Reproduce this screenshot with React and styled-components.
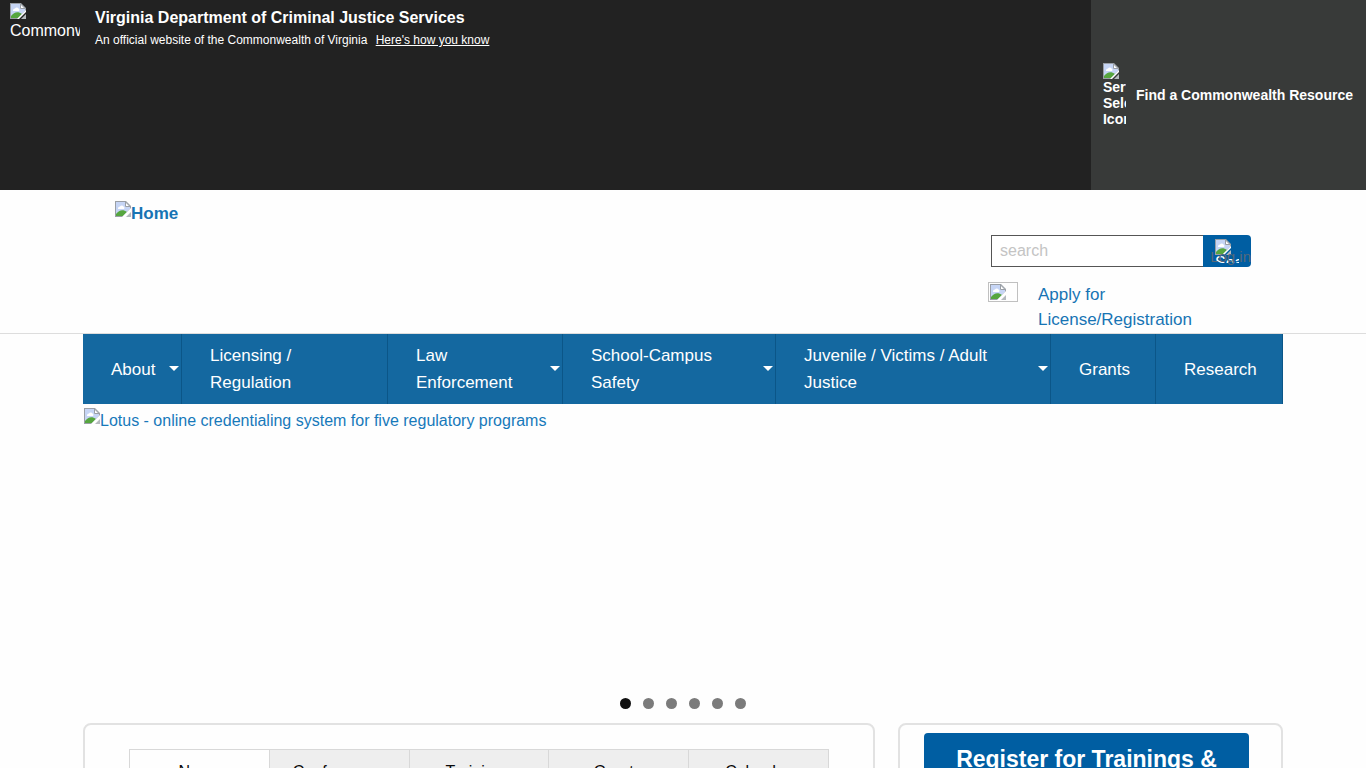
import { useState } from 'react';
import styled, { createGlobalStyle } from 'styled-components';

const GlobalStyle = createGlobalStyle`
    *, *::before, *::after {
        box-sizing: border-box;
    }

    body {
        margin: 0;
        background-color: #fefefe;
        color: #0a0a0a;
        font-family: "Liberation Sans", Arial, sans-serif;
        font-size: 16px;
        line-height: 24px;
    }

    a {
        color: #1774b4;
        text-decoration: none;
    }
`

const BrandBar = styled.header`
    display: flex;
    justify-content: space-between;
    min-height: 190px;
    background-color: #222;
    color: #fff;

    div.brand {
        display: flex;
        gap: 15px;
        padding: 3px 10px;
    }

    strong {
        display: block;
        font-size: 16px;
        line-height: 30px;
    }

    p {
        margin: 0;
        font-size: 12px;
        line-height: 14px;
    }

    p a {
        margin-left: 5px;
        color: #fff;
        text-decoration: underline;
    }
`

const AltBox = styled.span`
    display: block;
    flex: none;
    width: ${({ $width }) => $width}px;
    height: ${({ $height }) => ($height ? `${$height}px` : 'auto')};
    overflow: hidden;
    text-align: left;
    line-height: ${({ $line }) => $line}px;

    svg {
        display: block;
    }
`

const ResourceLink = styled.a`
    display: flex;
    align-items: center;
    gap: 10px;
    padding: 0 13px 0 12px;
    background-color: #383a39;
    color: #fff;
    font-size: 14px;
    font-weight: bold;
`

const SiteHeader = styled.div`
    min-height: 144px;
    border-bottom: 1px solid #ddd;
`

const Container = styled.div`
    max-width: 1200px;
    margin: 0 auto;
`

const HeaderRow = styled(Container)`
    display: flex;
    justify-content: space-between;
    padding: 11px 32px 0;
`

const HomeLink = styled.a`
    display: flex;
    align-items: flex-start;
    font-size: 17px;
    font-weight: bold;
    line-height: 26px;
`

const Tools = styled.div`
    width: 263px;
    padding-top: 34px;
`

const SearchForm = styled.form`
    position: relative;
    display: flex;
    margin-left: 3px;

    input {
        flex: 1;
        min-width: 0;
        height: 32px;
        padding: 0 8px;
        border: 1px solid #555;
        border-right: 0;
        background-color: #fff;
        font: inherit;
    }

    input::placeholder {
        color: #c4c4c4;
    }

    button {
        width: 48px;
        height: 32px;
        padding: 4px 12px;
        border: 0;
        border-radius: 0 4px 4px 0;
        background-color: #005ea2;
        color: #fff;
        font: inherit;
    }
`

const LoginLink = styled.a`
    position: absolute;
    right: 0;
    bottom: -2px;
    color: #56697a;
    font-size: 15px;
`

const ApplyLink = styled.a`
    display: flex;
    gap: 20px;
    margin-top: 15px;
    font-size: 17px;
    line-height: 25px;

    span.thumb {
        flex: none;
        width: 30px;
        height: 20px;
        padding: 1px;
        border: 1px solid #c0c0c0;
    }

    svg {
        display: block;
    }
`

const MainNav = styled.nav`
    display: grid;
    grid-template-columns: 99fr 206fr 175fr 213fr 275fr 105fr 127fr;
    max-width: 1200px;
    min-height: 70px;
    margin: 0 auto;
    background-color: #1468a0;
`

const NavItem = styled.a`
    position: relative;
    display: flex;
    align-items: center;
    padding: 8px 24px 8px 28px;
    border-right: 1px solid #0b5688;
    color: #fff;
    font-size: 17px;
    line-height: 27px;

    &::after {
        content: '';
        display: ${({ $arrow }) => ($arrow ? 'block' : 'none')};
        position: absolute;
        right: 2px;
        top: 50%;
        margin-top: -3px;
        border: 5px solid transparent;
        border-top-color: #fff;
        border-bottom: 0;
    }
`

const Slider = styled.section`
    min-height: 319px;
    display: flex;
    flex-direction: column;
    justify-content: space-between;
    padding: 4px 1px 14px;

    a.slide {
        display: flex;
        color: #1779ba;
        line-height: 26px;
    }
`

const Dots = styled.div`
    display: flex;
    justify-content: center;
    gap: 12px;
`

const Dot = styled.button`
    width: 11px;
    height: 11px;
    padding: 0;
    border: 0;
    border-radius: 50%;
    background-color: ${({ $active }) => ($active ? '#111' : '#7b7b7b')};
`

const Panels = styled(Container)`
    display: grid;
    grid-template-columns: 792fr 385fr;
    gap: 23px;
`

const Panel = styled.section`
    padding: ${({ $side }) => ($side ? '8px 32px 32px 24px' : '24px 44px')};
    border: 2px solid #e2e2e2;
    border-radius: 8px;
`

const Tabs = styled.div`
    display: grid;
    grid-template-columns: repeat(5, 1fr);
    border: 1px solid #d8d8d8;
    border-right: 0;
`

const Tab = styled.button`
    padding: 10px 2px 10px 0;
    border: 0;
    border-right: 1px solid #d8d8d8;
    background-color: ${({ $active }) => ($active ? '#fefefe' : '#eee')};
    color: #0a0a0a;
    font: inherit;
`

const RegisterLink = styled.a`
    display: block;
    padding: 11px 16px;
    border-radius: 4px;
    background-color: #005ea2;
    color: #fff;
    font-size: 23px;
    font-weight: bold;
    line-height: 30px;
    text-align: center;
`

const navItems = [
    { label: 'About', arrow: true },
    { label: 'Licensing / Regulation' },
    { label: 'Law Enforcement', arrow: true },
    { label: 'School-Campus Safety', arrow: true },
    { label: 'Juvenile / Victims / Adult Justice', arrow: true },
    { label: 'Grants' },
    { label: 'Research' },
]

const tabs = ['News', 'Conferences', 'Trainings', 'Grants', 'Calendar']

function ImageIcon() {
    return (
        <svg width="16" height="16" viewBox="0 0 16 16" aria-hidden="true">
            <path d="M0 0h11l5 5v3l-8 8H0z" fill="#9a9fa6" />
            <path d="M1 1h9.500L15 5.500V8l-7 7H1z" fill="#c6d5f5" />
            <path d="M10.500 1v4.500H15z" fill="#fff" stroke="#9a9fa6" />
            <path d="M3 7.500a2 2 0 0 1 2-2 2 2 0 0 1 3.500 0A1.500 1.500 0 0 1 9 8H3z" fill="#fff" />
            <path d="M1 15v-2c3-4 7-5 11-2l-4 4z" fill="#56a63f" />
            <path d="M7 16 16 7v2l-7 7z" fill="#fff" />
            <path d="M11 16l5-5v5z" fill="#b4b9bd" />
        </svg>
    )
}

export default function App() {
    const [slide, setSlide] = useState(0);
    const [tab, setTab] = useState('News');

    return (
        <>
            <GlobalStyle />
            <BrandBar>
                <div className="brand">
                    <AltBox $width={70} $line={23}><ImageIcon />Commonwealth</AltBox>
                    <div>
                        <strong>Virginia Department of Criminal Justice Services</strong>
                        <p>An official website of the Commonwealth of Virginia <a href="#how">Here's how you know</a></p>
                    </div>
                </div>
                <ResourceLink href="#resource">
                    <AltBox $width={23} $line={16}><ImageIcon />Service Selector Icon</AltBox>
                    Find a Commonwealth Resource
                </ResourceLink>
            </BrandBar>

            <SiteHeader>
                <HeaderRow>
                    <HomeLink href="#home"><ImageIcon />Home</HomeLink>
                    <Tools>
                        <SearchForm onSubmit={e => e.preventDefault()}>
                            <input type="text" placeholder="search" aria-label="search" />
                            <button type="submit">
                                <AltBox $width={24} $height={24} $line={16}><ImageIcon />Search</AltBox>
                            </button>
                            <LoginLink href="#login">Log in</LoginLink>
                        </SearchForm>
                        <ApplyLink href="#apply">
                            <span className="thumb"><ImageIcon /></span>
                            Apply for License/Registration
                        </ApplyLink>
                    </Tools>
                </HeaderRow>
            </SiteHeader>

            <MainNav>
                {navItems.map(({ label, arrow }) => (
                    <NavItem key={label} href="#nav" $arrow={arrow}>{label}</NavItem>
                ))}
            </MainNav>

            <Container>
                <Slider>
                    <a className="slide" href="#lotus">
                        <ImageIcon />Lotus - online credentialing system for five regulatory programs
                    </a>
                    <Dots>
                        {[0, 1, 2, 3, 4, 5].map(n => (
                            <Dot key={n} $active={n === slide} aria-label={`Slide ${n + 1}`} onClick={() => setSlide(n)} />
                        ))}
                    </Dots>
                </Slider>
            </Container>

            <Panels>
                <Panel>
                    <Tabs>
                        {tabs.map(name => (
                            <Tab key={name} $active={name === tab} onClick={() => setTab(name)}>{name}</Tab>
                        ))}
                    </Tabs>
                </Panel>
                <Panel $side>
                    <RegisterLink href="#register">Register for Trainings &amp; Events</RegisterLink>
                </Panel>
            </Panels>
        </>
    )
}
